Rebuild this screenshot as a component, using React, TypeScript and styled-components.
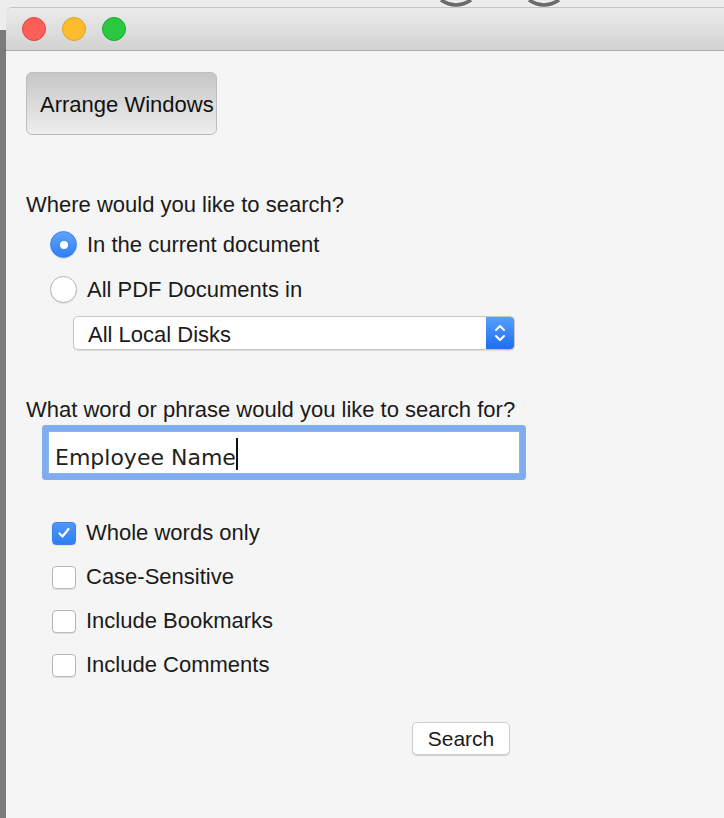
import styled, { createGlobalStyle } from "styled-components";

const GlobalStyle = createGlobalStyle`
  * {
    box-sizing: border-box;
  }

  body {
    margin: 0;
    font-family: "Liberation Sans", Arial, sans-serif;
    color: #1a1a1a;
  }
`;

const Desktop = styled.div`
  position: relative;
  display: flex;
  height: 818px;
  background: #ededed;
  overflow: hidden;
`;

const DockIcon = styled.svg<{ $left: number }>`
  position: absolute;
  top: 0;
  left: ${(p) => p.$left}px;
`;

const SideStrip = styled.div`
  width: 6px;
  margin-top: 30px;
  background: #7b7b7b;
`;

const Window = styled.div`
  flex: 1;
  display: flex;
  flex-direction: column;
  margin-top: 7px;
  background: #f5f5f5;
  border-top: 1px solid #c4c4c4;
  border-top-left-radius: 6px;
  overflow: hidden;
`;

const TitleBar = styled.div`
  display: flex;
  align-items: center;
  gap: 16px;
  height: 43px;
  padding-left: 16px;
  background: linear-gradient(#ebebeb, #d2d2d2);
  border-bottom: 1px solid #acacac;
`;

const Light = styled.span<{ $fill: string; $edge: string }>`
  width: 24px;
  height: 24px;
  border-radius: 50%;
  background: ${(p) => p.$fill};
  border: 1px solid ${(p) => p.$edge};
`;

const Content = styled.div`
  display: flex;
  flex-direction: column;
  align-items: flex-start;
  padding: 21px 0 0 20px;
`;

const ArrangeButton = styled.button`
  width: 191px;
  height: 63px;
  padding: 2px 0 0 13px;
  text-align: left;
  font-family: inherit;
  font-size: 22px;
  color: #111;
  background: linear-gradient(#c6c6c6, #eeeeee);
  border: 1px solid #bdbdbd;
  border-radius: 6px;
`;

const Question = styled.div<{ $top: number }>`
  margin-top: ${(p) => p.$top}px;
  font-size: 22px;
  line-height: 26px;
`;

const OptionRow = styled.label<{ $height: number; $indent: number }>`
  display: flex;
  align-items: center;
  gap: 10px;
  height: ${(p) => p.$height}px;
  padding-left: ${(p) => p.$indent}px;
  font-size: 22px;
  line-height: 26px;
`;

const RadioGroup = styled.div`
  margin-top: 4px;
`;

const Radio = styled.span<{ $on?: boolean }>`
  display: flex;
  align-items: center;
  justify-content: center;
  width: 27px;
  height: 27px;
  border-radius: 50%;
  background: ${(p) => (p.$on ? "linear-gradient(#5ea3f9, #2f7ff2)" : "#fff")};
  border: 1px solid ${(p) => (p.$on ? "#3a82ee" : "#b3b3b3")};
  box-shadow: 0 1px 1px rgba(0, 0, 0, 0.08);

  &::after {
    content: "";
    display: ${(p) => (p.$on ? "block" : "none")};
    width: 8px;
    height: 8px;
    border-radius: 50%;
    background: #fff;
  }
`;

const Select = styled.div`
  display: flex;
  width: 442px;
  height: 34px;
  margin: 4px 0 0 47px;
  background: #fff;
  border: 1px solid #c6c6c6;
  border-radius: 5px;
  box-shadow: 0 1px 1px rgba(0, 0, 0, 0.1);
  overflow: hidden;
`;

const SelectText = styled.span`
  flex: 1;
  padding: 2px 0 0 14px;
  font-size: 22px;
  line-height: 32px;
`;

const SelectArrows = styled.span`
  display: flex;
  align-items: center;
  justify-content: center;
  width: 28px;
  background: linear-gradient(#56a0fa, #1d6ef0);
`;

const Field = styled.div`
  display: flex;
  align-items: flex-start;
  width: 472px;
  height: 43px;
  margin: 8px 0 0 22px;
  padding: 0 6px;
  background: #fff;
  border: 1px solid #8db2ec;
  border-radius: 1px;
  box-shadow: 0 0 0 6px #80adf0;
  font-family: "DejaVu Sans", sans-serif;
  font-size: 22px;
`;

const FieldText = styled.span`
  margin-top: 13px;
  line-height: 26px;
  color: #222;
`;

const Caret = styled.span`
  width: 2px;
  height: 32px;
  margin-top: 6px;
  background: #111;
`;

const Checks = styled.div`
  margin-top: 37px;
`;

const Check = styled.span<{ $on?: boolean }>`
  display: flex;
  align-items: center;
  justify-content: center;
  width: 24px;
  height: 23px;
  border-radius: 4px;
  background: ${(p) => (p.$on ? "linear-gradient(#4e97f8, #2f7ff2)" : "#fff")};
  border: 1px solid ${(p) => (p.$on ? "#3a82ee" : "#b8b8b8")};
  box-shadow: 0 1px 1px rgba(0, 0, 0, 0.08);
`;

const ButtonRow = styled.div`
  display: flex;
  justify-content: flex-end;
  width: 484px;
  margin-top: 35px;
`;

const SearchButton = styled.button`
  width: 98px;
  height: 33px;
  padding: 1px 0 0;
  font-family: inherit;
  font-size: 21px;
  color: #1a1a1a;
  background: #fff;
  border: 1px solid #cdcdcd;
  border-radius: 5px;
  box-shadow: 0 1px 1px rgba(0, 0, 0, 0.15);
`;

const checkOptions = [
  { label: "Whole words only", on: true },
  { label: "Case-Sensitive", on: false },
  { label: "Include Bookmarks", on: false },
  { label: "Include Comments", on: false },
];

function Bowl({ left }: { left: number }) {
  return (
    <DockIcon $left={left} width="34" height="8" viewBox="0 0 34 8">
      <path d="M2 0 Q 17 10 32 0" fill="none" stroke="#6a6a6a" strokeWidth="3.5" />
    </DockIcon>
  );
}

export default function App() {
  return (
    <>
      <GlobalStyle />
      <Desktop>
        <Bowl left={439} />
        <Bowl left={527} />
        <SideStrip />
        <Window>
          <TitleBar>
            <Light $fill="#fc5f57" $edge="#e2463f" />
            <Light $fill="#fdbc2e" $edge="#e0a226" />
            <Light $fill="#28c840" $edge="#1aab2a" />
          </TitleBar>
          <Content>
            <ArrangeButton>Arrange Windows</ArrangeButton>

            <Question $top={57}>Where would you like to search?</Question>
            <RadioGroup>
              <OptionRow $height={45} $indent={24}>
                <Radio $on />
                In the current document
              </OptionRow>
              <OptionRow $height={45} $indent={24}>
                <Radio />
                All PDF Documents in
              </OptionRow>
            </RadioGroup>
            <Select>
              <SelectText>All Local Disks</SelectText>
              <SelectArrows>
                <svg width="12" height="20" viewBox="0 0 12 20">
                  <path d="M2 7 L6 3 L10 7 M2 13 L6 17 L10 13" fill="none" stroke="#fff" strokeWidth="2" strokeLinecap="round" strokeLinejoin="round" />
                </svg>
              </SelectArrows>
            </Select>

            <Question $top={47}>What word or phrase would you like to search for?</Question>
            <Field>
              <FieldText>Employee Name</FieldText>
              <Caret />
            </Field>

            <Checks>
              {checkOptions.map((o) => (
                <OptionRow key={o.label} $height={44} $indent={26}>
                  <Check $on={o.on}>
                    {o.on && (
                      <svg width="14" height="14" viewBox="0 0 14 14">
                        <path d="M2.5 7.5 L5.5 10.5 L11.5 3" fill="none" stroke="#fff" strokeWidth="2.2" strokeLinecap="round" strokeLinejoin="round" />
                      </svg>
                    )}
                  </Check>
                  {o.label}
                </OptionRow>
              ))}
            </Checks>

            <ButtonRow>
              <SearchButton>Search</SearchButton>
            </ButtonRow>
          </Content>
        </Window>
      </Desktop>
    </>
  );
}
